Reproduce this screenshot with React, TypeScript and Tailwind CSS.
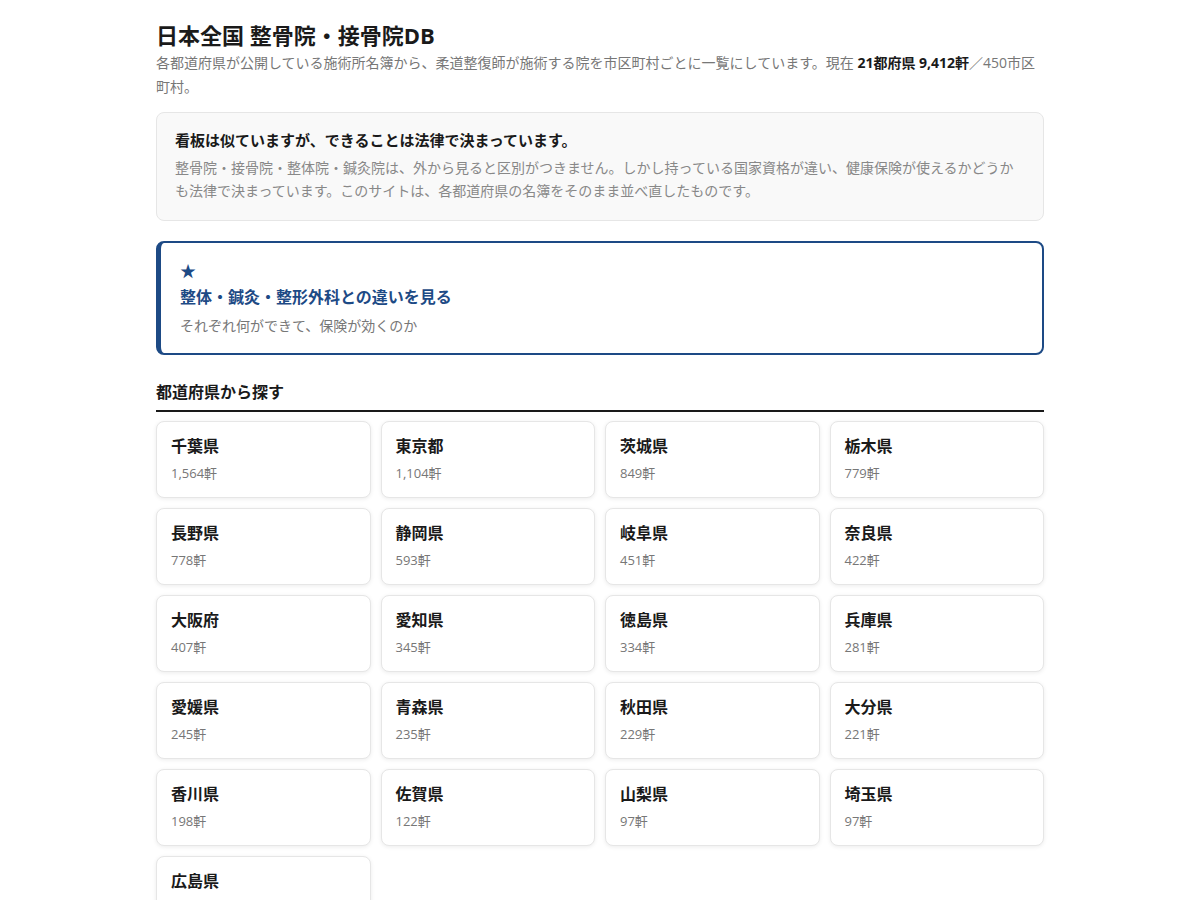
import React from "react";

type Pref = { name: string; count: string };

const PREFS: Pref[] = [
  { name: "千葉県", count: "1,564軒" },
  { name: "東京都", count: "1,104軒" },
  { name: "茨城県", count: "849軒" },
  { name: "栃木県", count: "779軒" },
  { name: "長野県", count: "778軒" },
  { name: "静岡県", count: "593軒" },
  { name: "岐阜県", count: "451軒" },
  { name: "奈良県", count: "422軒" },
  { name: "大阪府", count: "407軒" },
  { name: "愛知県", count: "345軒" },
  { name: "徳島県", count: "334軒" },
  { name: "兵庫県", count: "281軒" },
  { name: "愛媛県", count: "245軒" },
  { name: "青森県", count: "235軒" },
  { name: "秋田県", count: "229軒" },
  { name: "大分県", count: "221軒" },
  { name: "香川県", count: "198軒" },
  { name: "佐賀県", count: "122軒" },
  { name: "山梨県", count: "97軒" },
  { name: "埼玉県", count: "97軒" },
  { name: "広島県", count: "88軒" },
];

export default function App() {
  return (
    <div
      className="min-h-screen bg-white text-[#1a1a1a]"
      style={{ fontFamily: '"Open Sans", "Noto Sans CJK JP", sans-serif' }}
    >
      <div className="mx-auto w-[888px] pt-[20px] pb-10">
        <h1 className="text-[22px] font-bold leading-[30px]">
          日本全国 整骨院・接骨院DB
        </h1>
        <p className="mt-[1px] text-[14px] leading-[24px] text-[#777]">
          各都道府県が公開している施術所名簿から、柔道整復師が施術する院を市区町村ごとに一覧にしています。現在{" "}
          <strong className="font-bold text-[#1a1a1a]">21都府県 9,412軒</strong>
          ／450市区町村。
        </p>

        <div className="mt-[13px] rounded-lg border border-[#e6e6e6] bg-[#f9f9f9] px-[18px] pt-[15px] pb-[18px]">
          <p className="text-[15px] font-bold leading-[24px]">
            看板は似ていますが、できることは法律で決まっています。
          </p>
          <p className="mt-[4px] text-[14px] leading-[23px] text-[#888]">
            整骨院・接骨院・整体院・鍼灸院は、外から見ると区別がつきません。しかし持っている国家資格が違い、健康保険が使えるかどうかも法律で決まっています。このサイトは、各都道府県の名簿をそのまま並べ直したものです。
          </p>
        </div>

        <a
          href="#"
          className="mt-[20px] block rounded-lg border-2 border-l-[5px] border-[#1d4a85] px-[19px] pt-[16px] pb-[16px]"
        >
          <div className="text-[16px] leading-[24px] text-[#1d4a85]">★</div>
          <div className="mt-[2px] text-[16px] font-bold leading-[24px] text-[#1d4a85]">
            整体・鍼灸・整形外科との違いを見る
          </div>
          <div className="mt-[6px] text-[14px] leading-[22px] text-[#777]">
            それぞれ何ができて、保険が効くのか
          </div>
        </a>

        <h2 className="mt-[25px] border-b-2 border-[#1a1a1a] pb-[6px] text-[16px] font-bold leading-[24px]">
          都道府県から探す
        </h2>

        <div className="mt-[9px] grid grid-cols-4 gap-[10px]">
          {PREFS.map((p) => (
            <a
              key={p.name}
              href="#"
              className="block h-[77px] rounded-lg border border-[#e6e6e6] bg-white px-[14px] pt-[12px] shadow-[0_1px_4px_rgba(0,0,0,0.08)]"
            >
              <div className="text-[16px] font-bold leading-[24px] text-[#1a1a1a]">
                {p.name}
              </div>
              <div className="mt-[5px] text-[13px] leading-[20px] text-[#777]">
                {p.count}
              </div>
            </a>
          ))}
        </div>
      </div>
    </div>
  );
}
